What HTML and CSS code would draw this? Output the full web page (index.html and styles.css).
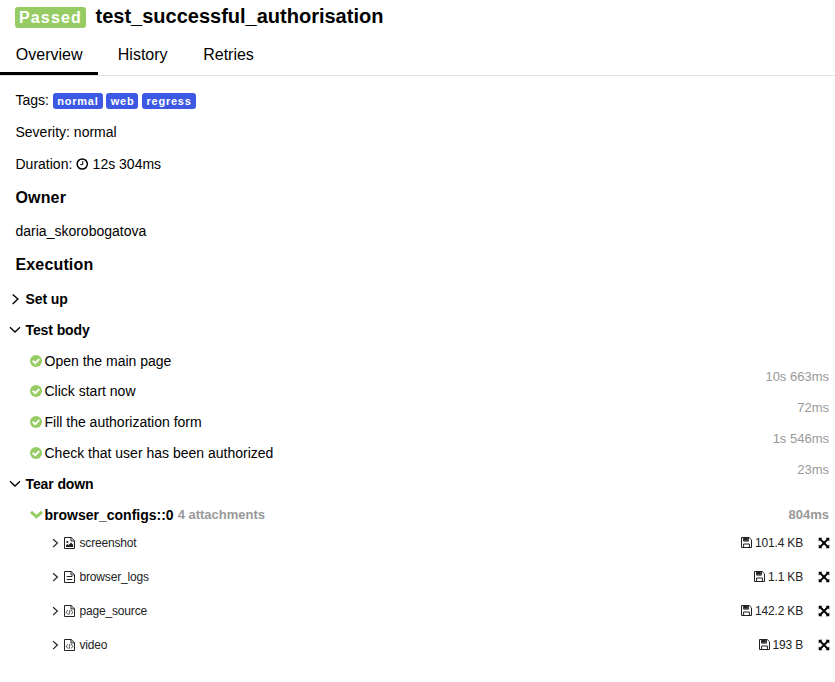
FILE: index.html
```html
<!DOCTYPE html>
<html lang="en">
<head>
<meta charset="utf-8">
<title>test_successful_authorisation</title>
<link rel="stylesheet" href="styles.css">
</head>
<body>
<svg class="sprite" aria-hidden="true">
  <symbol id="right" viewBox="0 0 12 12"><path d="M3.7 1.5 8.9 6 3.7 10.9" fill="none" stroke="currentColor" stroke-width="1.4"/></symbol>
  <symbol id="down" viewBox="0 0 12 12"><path d="M1 3.3 6 8 11 3.3" fill="none" stroke="currentColor" stroke-width="1.3"/></symbol>
  <symbol id="check" viewBox="0 0 12 12"><circle cx="6" cy="6" r="6" fill="currentColor"/><path d="m2.7 5.8 2.5 2.4 4.1-4.1" fill="none" stroke="#fff" stroke-width="2"/></symbol>
  <symbol id="clock" viewBox="0 0 12 12"><circle cx="6" cy="6" r="5.1" fill="none" stroke="currentColor" stroke-width="1.5"/><path d="M6.5 3v3.6H4" fill="none" stroke="currentColor"/></symbol>
  <symbol id="page" viewBox="0 0 11 12"><path d="M.5.5h6.7l3.3 3.2v7.8H.5zM7 .5v3.4h3.5" fill="none" stroke="currentColor"/></symbol>
  <symbol id="image" viewBox="0 0 11 12"><use href="#page"/><path d="M2 10V8.3l1.4-1.2 1.1 1L7 5.5l2.2 2.2V10z" fill="currentColor"/><circle cx="3.3" cy="5" r="1.1" fill="currentColor"/></symbol>
  <symbol id="text" viewBox="0 0 11 12"><use href="#page"/><path d="M2.7 5.5h5.6M2.7 8.5h5.6" stroke="currentColor" stroke-width="1.1"/></symbol>
  <symbol id="code" viewBox="0 0 11 12"><use href="#page"/><path d="M3.7 5.2 2.2 7.3l1.5 2.1M7.3 5.2l1.5 2.1-1.5 2.1M6.1 4.7 4.9 9.9" fill="none" stroke="currentColor" stroke-width=".8"/></symbol>
  <symbol id="save" viewBox="0 0 11 11"><path d="M.5.5h7.7l2.3 2.3v7.7H.5zM2.6 10.5V7h5.8v3.5M2.6.5v3.6h4.8V.5" fill="none" stroke="currentColor"/><path d="M3 1h3.8v2.7H3z" fill="currentColor"/></symbol>
  <symbol id="expand" viewBox="0 0 12 12"><path d="M2 2l8 8M10 2l-8 8" stroke="currentColor" stroke-width="1.9"/><path d="M.7.7h3.7L.7 4.4zM11.3.7v3.7L7.6.7zM.7 11.3V7.6l3.7 3.7zM11.3 11.3H7.6l3.7-3.7z" fill="currentColor"/></symbol>
</svg>
<header class="title"><span class="status">Passed</span><h1>test_successful_authorisation</h1></header>
<nav class="tabs"><a class="tab active">Overview</a><a class="tab">History</a><a class="tab">Retries</a></nav>
<main>
  <section class="info">
    <div class="line">Tags: <span class="tags"><span class="tag">normal</span><span class="tag">web</span><span class="tag">regress</span></span></div>
    <div class="line">Severity: normal</div>
    <div class="line">Duration: <svg class="clock"><use href="#clock"/></svg> 12s 304ms</div>
    <h2>Owner</h2>
    <div class="owner">daria_skorobogatova</div>
    <h2>Execution</h2>
  </section>
  <section class="execution">
    <div class="row stage"><svg class="icon"><use href="#right"/></svg><span>Set up</span></div>
    <div class="row stage"><svg class="icon"><use href="#down"/></svg><span>Test body</span></div>
    <div class="row step"><svg class="icon"><use href="#check"/></svg><span>Open the main page</span><span class="time">10s 663ms</span></div>
    <div class="row step"><svg class="icon"><use href="#check"/></svg><span>Click start now</span><span class="time">72ms</span></div>
    <div class="row step"><svg class="icon"><use href="#check"/></svg><span>Fill the authorization form</span><span class="time">1s 546ms</span></div>
    <div class="row step"><svg class="icon"><use href="#check"/></svg><span>Check that user has been authorized</span><span class="time">23ms</span></div>
    <div class="row stage"><svg class="icon"><use href="#down"/></svg><span>Tear down</span></div>
    <div class="row fixture"><svg class="thick" viewBox="0 0 13 9"><path d="M1 1.8 6.5 6.8 12 1.8" fill="none" stroke="currentColor" stroke-width="3"/></svg><span>browser_configs::0</span><span class="count">4 attachments</span><span class="total">804ms</span></div>
    <div class="file"><svg class="arrow"><use href="#right"/></svg><svg class="type"><use href="#image"/></svg><span class="name">screenshot</span><svg class="save"><use href="#save"/></svg><span class="size">101.4 KB</span><svg class="expand"><use href="#expand"/></svg></div>
    <div class="file"><svg class="arrow"><use href="#right"/></svg><svg class="type"><use href="#text"/></svg><span class="name">browser_logs</span><svg class="save"><use href="#save"/></svg><span class="size">1.1 KB</span><svg class="expand"><use href="#expand"/></svg></div>
    <div class="file"><svg class="arrow"><use href="#right"/></svg><svg class="type"><use href="#code"/></svg><span class="name">page_source</span><svg class="save"><use href="#save"/></svg><span class="size">142.2 KB</span><svg class="expand"><use href="#expand"/></svg></div>
    <div class="file"><svg class="arrow"><use href="#right"/></svg><svg class="type"><use href="#code"/></svg><span class="name">video</span><svg class="save"><use href="#save"/></svg><span class="size">193 B</span><svg class="expand"><use href="#expand"/></svg></div>
  </section>
</main>
</body>
</html>
```
FILE: styles.css
```css
* { box-sizing: border-box; }
body { margin: 0; background: #fff; color: #000; font: 14px/20px "Liberation Sans", Arial, sans-serif; }
svg { flex: none; }
.sprite { display: none; }
h1, h2 { margin: 0; font-weight: bold; }
.title { display: flex; height: 34px; padding: 7px 15px 0; }
.status { width: 71px; height: 21px; padding: 0 3px 0 4px; border-radius: 3px; background: #97cc64; color: #fff; font-size: 16px; font-weight: bold; line-height: 21px; letter-spacing: 1.15px; }
h1 { margin-left: 9.5px; font-size: 20px; line-height: 19px; }
.tabs { display: flex; height: 42px; border-bottom: 1px solid #e4e4e4; font-size: 16px; line-height: 41px; }
.tab { height: 41px; margin-right: 4px; padding: 0 15.8px; }
.tab.active { width: 98px; padding-right: 15px; border-bottom: 3px solid #000; }
.info { padding: 8px 15.5px 0; }
.line { display: flex; align-items: center; height: 32px; white-space: pre; }
.tags { display: flex; gap: 3.7px; padding-top: 2px; }
.tag { height: 16px; padding: 0 4px 0 4.5px; border-radius: 3px; background: #3d59e3; color: #fff; font-size: 11px; font-weight: bold; line-height: 16px; letter-spacing: .75px; }
.clock { width: 12.5px; height: 12px; }
h2 { height: 34px; font-size: 16px; line-height: 36px; letter-spacing: .15px; }
.owner { height: 33px; line-height: 34px; }
.execution { padding-top: 2.6px; }
.row { display: flex; align-items: center; height: 30.8px; white-space: pre; }
.icon { width: 12px; height: 12px; }
.stage { padding-left: 9px; font-weight: bold; gap: 4.5px; letter-spacing: -.1px; }
.step { padding: 0 6px 0 29.5px; gap: 3px; }
.step .icon { color: #97cc64; }
.time { align-self: flex-start; margin-left: auto; padding-top: 22px; height: 30px; color: #999; font-size: 13px; }
.fixture { height: 26.8px; padding: 4px 6px 0 30px; font-weight: bold; }
.thick { width: 13px; height: 9px; margin-right: 1.5px; color: #97cc64; }
.count { margin-left: 4px; color: #999; font-size: 13px; }
.total { margin-left: auto; color: #999; font-size: 13px; }
.file { display: flex; align-items: center; height: 34px; padding: 0 5px 0 50px; color: #222; font-size: 12px; }
.arrow { width: 10px; height: 10px; }
.type { width: 11px; height: 12px; margin: 0 4.5px 0 4px; }
.name { letter-spacing: -.17px; }
.size { letter-spacing: -.18px; }
.save { width: 11px; height: 11px; margin: 0 3px 0 auto; }
.expand { width: 12px; height: 12px; margin-left: 15px; color: #000; }
```
